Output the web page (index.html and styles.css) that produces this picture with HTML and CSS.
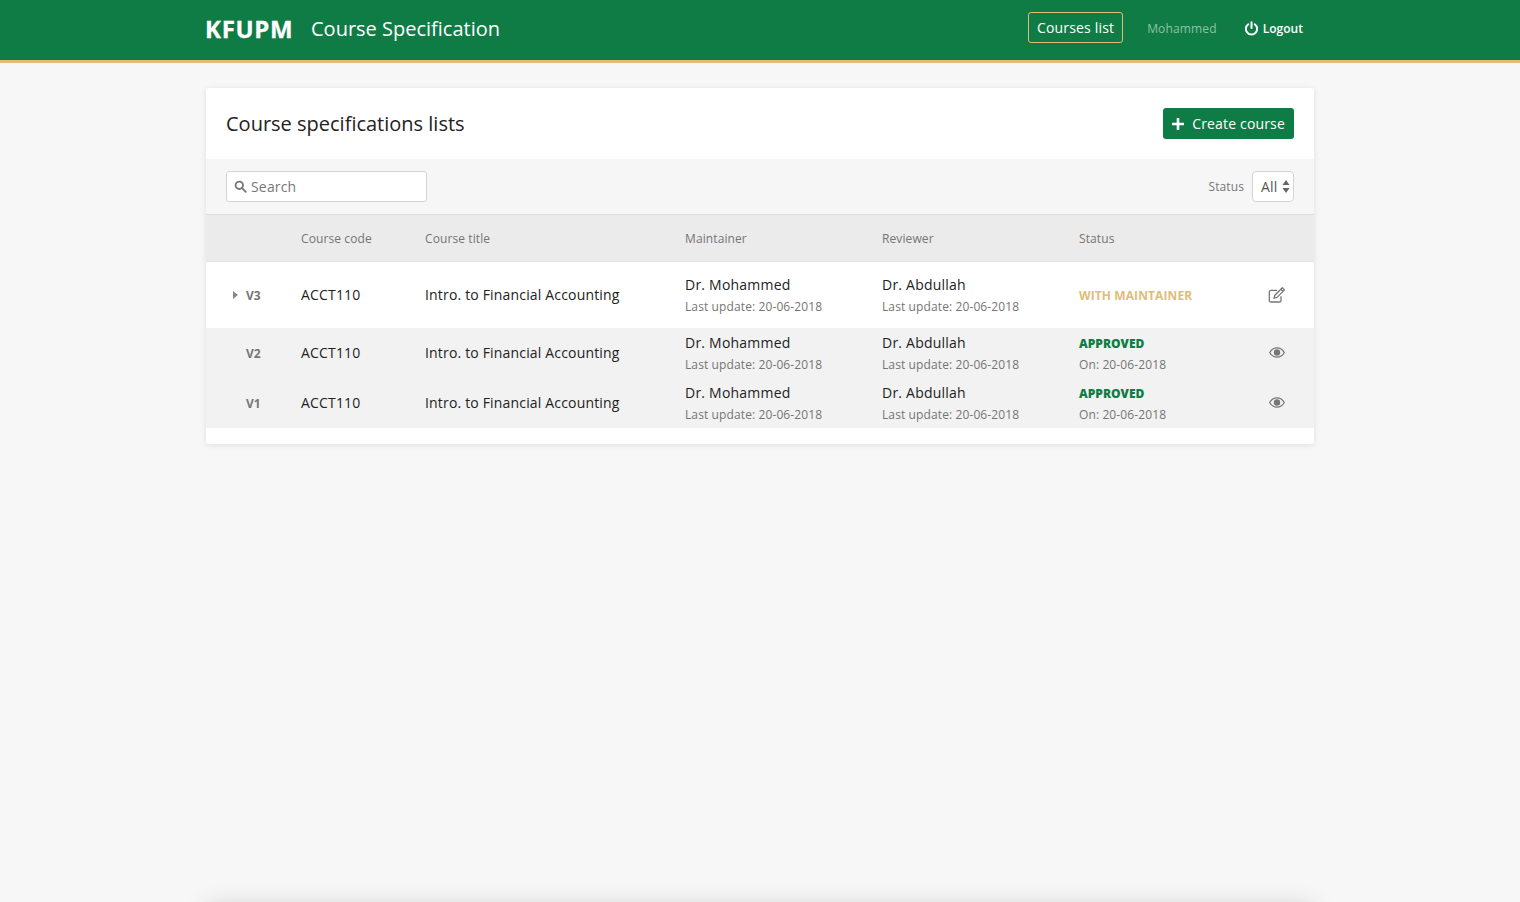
FILE: index.html
```html
<!DOCTYPE html>
<html lang="en">
<head>
<meta charset="utf-8">
<title>Course Specification</title>
<link rel="stylesheet" href="styles.css">
</head>
<body>
<header class="topbar">
  <div class="topbar-inner">
    <div class="brand"><span class="logo">KFUPM</span><span class="app-name">Course Specification</span></div>
    <nav class="nav">
      <a class="nav-active">Courses list</a>
      <span class="nav-user">Mohammed</span>
      <a class="nav-logout">
        <svg class="power" viewBox="0 0 16 16" width="15" height="15" fill="none" stroke="#fff" stroke-width="2.100" stroke-linecap="round"><path d="M4.6 3.4a6 6 0 1 0 6.8 0"/><path d="M8 1.2v6.2"/></svg>
        Logout
      </a>
    </nav>
  </div>
</header>
<main class="card">
  <div class="card-head">
    <h1>Course specifications lists</h1>
    <button class="btn-create">
      <svg viewBox="0 0 14 14" width="14" height="14" fill="none" stroke="#fff" stroke-width="2.6"><path d="M7 1v12M1 7h12"/></svg>
      Create course
    </button>
  </div>
  <div class="toolbar">
    <div class="search">
      <svg viewBox="0 0 14 14" width="13" height="13" fill="none" stroke="#767676" stroke-width="2" stroke-linecap="round"><circle cx="5.7" cy="5.7" r="4"/><path d="M8.7 8.7l4 4"/></svg>
      <span>Search</span>
    </div>
    <div class="filter">
      <span class="filter-label">Status</span>
      <div class="select"><span>All</span>
        <svg viewBox="0 0 8 13" width="8" height="13" fill="#666"><path d="M4 0l3.5 5H.5zM4 13L.5 8h7z"/></svg>
      </div>
    </div>
  </div>
  <div class="row thead">
    <div></div><div>Course code</div><div>Course title</div><div>Maintainer</div><div>Reviewer</div><div>Status</div><div></div>
  </div>
  <div class="row current">
    <div class="ver"><svg class="caret" viewBox="0 0 5 8" width="5" height="8" fill="#888"><path d="M0 0l5 4-5 4z"/></svg>V3</div>
    <div class="cell">ACCT110</div>
    <div class="cell">Intro. to Financial Accounting</div>
    <div class="person">Dr. Mohammed<small>Last update: 20-06-2018</small></div>
    <div class="person">Dr. Abdullah<small>Last update: 20-06-2018</small></div>
    <div class="status pending">WITH MAINTAINER</div>
    <div class="act">
      <svg viewBox="0 0 18 18" width="18" height="18" fill="none" stroke="#767676" stroke-width="1.3" stroke-linejoin="round"><path d="M13 10.2v4.2a1.6 1.6 0 0 1-1.6 1.6H2.900a1.600 1.600 0 0 1-1.600-1.600V6a1.600 1.600 0 0 1 1.600-1.600h6.300"/><path d="M6.800 9.200l7.500-7.500 2.200 2.200-7.500 7.500-2.900.7z"/><path d="M12.800 3.200l2.200 2.200"/></svg>
    </div>
  </div>
  <div class="row old">
    <div class="ver">V2</div>
    <div class="cell">ACCT110</div>
    <div class="cell">Intro. to Financial Accounting</div>
    <div class="person">Dr. Mohammed<small>Last update: 20-06-2018</small></div>
    <div class="person">Dr. Abdullah<small>Last update: 20-06-2018</small></div>
    <div class="status approved"><b>APPROVED</b><small>On: 20-06-2018</small></div>
    <div class="act"><svg viewBox="0 0 16 11" width="16" height="11"><path d="M.7 5.500C2.500 2.300 5 .8 8 .8s5.500 1.500 7.300 4.700C13.500 8.700 11 10.200 8 10.200S2.500 8.700.7 5.500z" fill="none" stroke="#767676" stroke-width="1.200"/><circle cx="8" cy="5.500" r="3.200" fill="#767676"/></svg></div>
  </div>
  <div class="row old">
    <div class="ver">V1</div>
    <div class="cell">ACCT110</div>
    <div class="cell">Intro. to Financial Accounting</div>
    <div class="person">Dr. Mohammed<small>Last update: 20-06-2018</small></div>
    <div class="person">Dr. Abdullah<small>Last update: 20-06-2018</small></div>
    <div class="status approved"><b>APPROVED</b><small>On: 20-06-2018</small></div>
    <div class="act"><svg viewBox="0 0 16 11" width="16" height="11"><path d="M.7 5.500C2.500 2.300 5 .8 8 .8s5.500 1.500 7.300 4.700C13.500 8.700 11 10.200 8 10.200S2.500 8.700.7 5.500z" fill="none" stroke="#767676" stroke-width="1.200"/><circle cx="8" cy="5.500" r="3.200" fill="#767676"/></svg></div>
  </div>
</main>
<div class="footer-shadow"></div>
</body>
</html>
```
FILE: styles.css
```css
* { box-sizing: border-box; }
html, body { height: 100%; }
body {
  margin: 0;
  background: #f7f7f7;
  font-family: "Open Sans", sans-serif;
  font-size: 14px;
  letter-spacing: .17px;
  color: #222;
  overflow: hidden;
}
.topbar {
  height: 63px;
  background: #107c45;
  border-bottom: 3px solid #e2bc77;
  color: #fff;
}
.topbar-inner {
  width: 1108px;
  height: 60px;
  margin: 0 auto;
  padding-bottom: 5px;
  display: flex;
  align-items: center;
  justify-content: space-between;
}
.brand { display: flex; align-items: center; }
.logo { font-size: 24px; font-weight: 700; letter-spacing: .7px; width: 105px; line-height: 1; margin-top: 2px; margin-left: -1px; padding-right: 0; flex: 0 0 106px; -webkit-text-stroke: .3px #fff; }
.app-name { font-size: 20px; letter-spacing: 0; padding-top: 2px; }
.nav { display: flex; align-items: center; font-size: 14px; }
.nav-active {
  display: block;
  height: 31px;
  line-height: 29px;
  padding: 0 8px;
  border: 1px solid #e2bc77;
  border-radius: 3px;
}
.nav-user { margin-left: 24px; padding-top: 2px; font-size: 12px; letter-spacing: .15px; color: #8cc0a4; }
.nav-logout {
  display: flex;
  align-items: center;
  gap: 4px;
  margin-left: 27px;
  margin-right: 11px;
  padding-top: 2px;
  font-size: 12px;
  font-weight: 600;
  letter-spacing: .02px;
}
.card {
  width: 1108px;
  height: 356px;
  margin: 25px auto 0;
  background: #fff;
  border-radius: 3px;
  box-shadow: 0 1px 6px rgba(0,0,0,.1);
  overflow: hidden;
}
.card-head {
  height: 71px;
  padding: 0 20px;
  display: flex;
  align-items: center;
  justify-content: space-between;
}
h1 { margin: 0; font-size: 20px; font-weight: 400; letter-spacing: 0; color: #222; }
.btn-create {
  display: flex;
  align-items: center;
  gap: 7px;
  height: 31px;
  padding: 0 9px 0 8px;
  border: 0;
  border-radius: 3px;
  background: #107c45;
  color: #fff;
  font: 14px "Open Sans", sans-serif;
  letter-spacing: .17px;
}
.toolbar {
  height: 56px;
  padding: 0 20px 1px;
  background: #f6f6f6;
  border-bottom: 1px solid #dedede;
  display: flex;
  align-items: center;
  justify-content: space-between;
}
.search {
  width: 201px;
  height: 31px;
  padding: 0 7px;
  background: #fff;
  border: 1px solid #d4d4d4;
  border-radius: 3px;
  display: flex;
  align-items: center;
  gap: 4px;
  color: #777;
}
.filter { display: flex; align-items: center; gap: 8px; }
.filter-label { font-size: 12px; letter-spacing: .1px; color: #777; }
.select {
  width: 42px;
  height: 31px;
  padding: 0 3px 0 8px;
  background: #fff;
  border: 1px solid #d4d4d4;
  border-radius: 4px;
  display: flex;
  align-items: center;
  justify-content: space-between;
  color: #555;
}
.row {
  display: grid;
  grid-template-columns: 95px 124px 260px 197px 197px 189px 46px;
  align-items: center;
}
.thead {
  height: 47px;
  background: #ebebeb;
  border-bottom: 1px solid #e2e2e2;
  font-size: 12px;
  letter-spacing: .1px;
  color: #757575;
}
.current { height: 66px; background: #fff; }
.old { height: 50px; background: #f2f2f2; }
.cell { padding-bottom: 2px; }
.ver {
  position: relative;
  padding-left: 40px;
  font-size: 12px;
  font-weight: 700;
  letter-spacing: 0;
  color: #767676;
}
.caret { position: absolute; left: 27px; top: 4px; }
.person { line-height: 22px; letter-spacing: .22px; }
.person small, .status small { display: block; font-size: 12px; letter-spacing: .11px; color: #757575; line-height: 21px; font-weight: 400; }
.status { font-size: 12px; font-weight: 700; line-height: 21px; letter-spacing: .1px; }
.approved { padding-top: 2px; }
.status b { display: block; letter-spacing: 0; }
.pending { color: #e2bc77; }
.approved b { color: #107c45; }
.act { display: flex; }
.old .act { padding-left: 1px; padding-bottom: 2px; }
.footer-shadow {
  position: fixed;
  left: 206px;
  top: 906px;
  width: 1108px;
  height: 40px;
  box-shadow: 0 0 24px rgba(0,0,0,.16);
}
```
